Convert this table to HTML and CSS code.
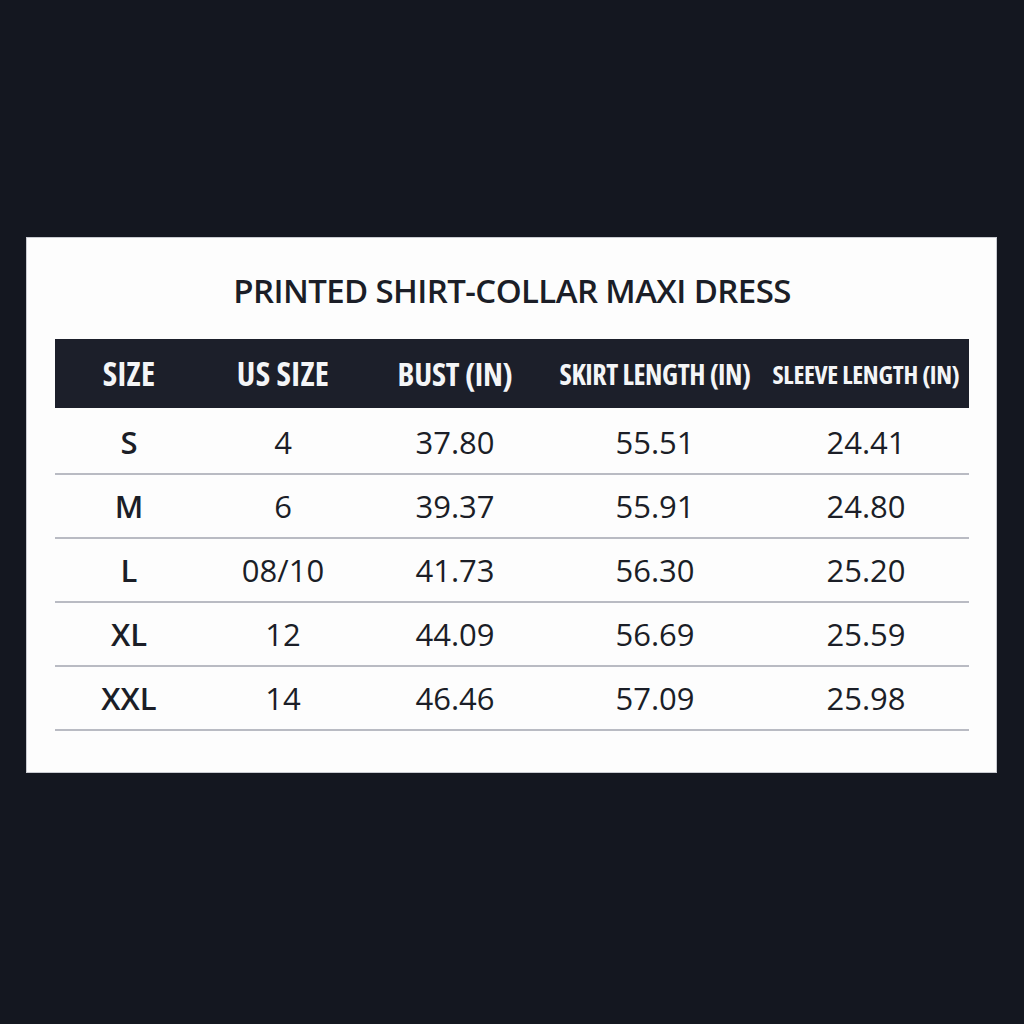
FILE: index.html
```html
<!DOCTYPE html>
<html lang="en">
<head>
<meta charset="utf-8">
<title>Printed Shirt-Collar Maxi Dress – Size Chart</title>
<link rel="stylesheet" href="styles.css">
</head>
<body>
<div class="card">
  <h1 class="title">PRINTED SHIRT-COLLAR MAXI DRESS</h1>
  <table class="chart">
    <thead>
      <tr>
        <th class="c1">SIZE</th>
        <th class="c2">US SIZE</th>
        <th class="c3 bust">BUST (IN)</th>
        <th class="c4 skirt">SKIRT LENGTH (IN)</th>
        <th class="c5 sleeve">SLEEVE LENGTH (IN)</th>
      </tr>
    </thead>
    <tbody>
      <tr><td class="sz">S</td><td>4</td><td>37.80</td><td>55.51</td><td>24.41</td></tr>
      <tr><td class="sz">M</td><td>6</td><td>39.37</td><td>55.91</td><td>24.80</td></tr>
      <tr><td class="sz">L</td><td>08/10</td><td>41.73</td><td>56.30</td><td>25.20</td></tr>
      <tr><td class="sz">XL</td><td>12</td><td>44.09</td><td>56.69</td><td>25.59</td></tr>
      <tr><td class="sz">XXL</td><td>14</td><td>46.46</td><td>57.09</td><td>25.98</td></tr>
    </tbody>
  </table>
</div>
</body>
</html>
```
FILE: styles.css
```css
html, body {
  margin: 0;
  padding: 0;
  background: #141720;
}
body {
  width: 1024px;
  height: 1024px;
  padding: 237px 0 0 26px;
  box-sizing: border-box;
  font-family: "Open Sans", "Noto Sans", "DejaVu Sans", sans-serif;
  color: #1b1e27;
}
.card {
  width: 971px;
  height: 536px;
  box-sizing: border-box;
  background: #fdfdfd;
  border: 1px solid #c9cbd1;
  padding: 35px 27px 0 28px;
}
.title {
  margin: 0;
  height: 36px;
  line-height: 36px;
  text-align: center;
  font-size: 33px;
  font-weight: 600;
  letter-spacing: -0.6px;
  color: #1b1e27;
}
.chart {
  margin-top: 30px;
  width: 914px;
  border-collapse: collapse;
  table-layout: fixed;
}
.chart th {
  background: #1c1f2a;
  color: #f4f5f7;
  height: 69px;
  padding: 0;
  font-size: 33px;
  font-weight: 700;
  font-stretch: 75%;
  letter-spacing: 0.3px;
  text-align: center;
  vertical-align: middle;
}
.chart th.bust {
  font-size: 32px;
  letter-spacing: -0.2px;
}
.chart th.skirt {
  font-size: 28px;
  letter-spacing: -0.4px;
}
.chart th.sleeve {
  font-size: 25.5px;
  letter-spacing: -0.3px;
}
.c1 { width: 148px; }
.c2 { width: 160px; }
.c3 { width: 184px; }
.c4 { width: 216px; }
.c5 { width: 206px; }
.chart tbody tr:first-child td {
  border-top: 3px solid #fdfdfd;
}
.chart td {
  height: 62px;
  padding: 0;
  text-align: center;
  vertical-align: middle;
  font-size: 31px;
  font-weight: 400;
  border-bottom: 2px solid #b9bbc3;
  color: #1b1e27;
}
.chart td.sz {
  font-weight: 600;
}
```
